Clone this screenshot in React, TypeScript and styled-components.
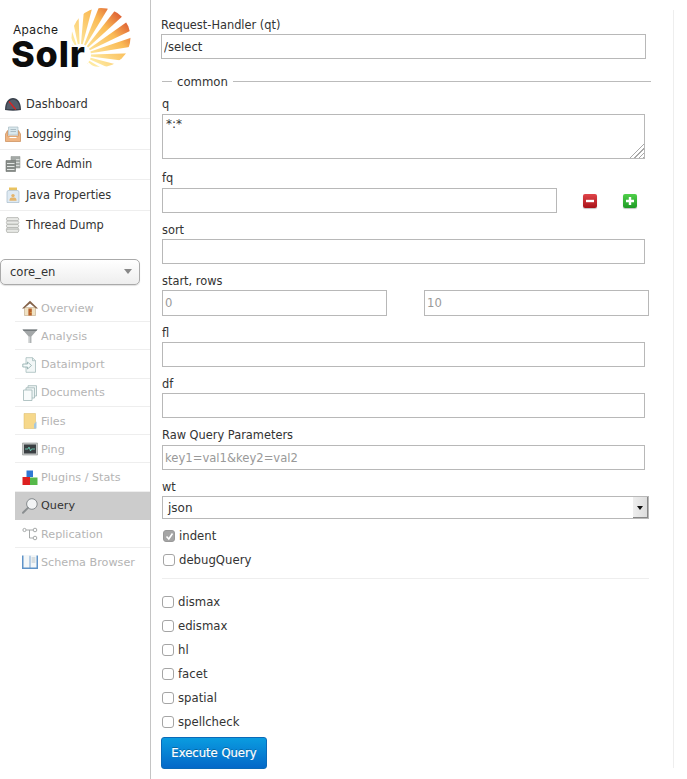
import React from 'react';
import styled, { createGlobalStyle } from 'styled-components';

const GlobalStyle = createGlobalStyle`
  html, body {
    margin: 0;
    padding: 0;
    background: #fff;
    font-family: "DejaVu Sans", "Liberation Sans", sans-serif;
    font-size: 12px;
    color: #333;
  }
  * {
    box-sizing: border-box;
  }
`;

type IconName =
  | 'dashboard'
  | 'logging'
  | 'coreAdmin'
  | 'java'
  | 'thread'
  | 'overview'
  | 'analysis'
  | 'dataimport'
  | 'documents'
  | 'files'
  | 'ping'
  | 'plugins'
  | 'query'
  | 'replication'
  | 'schema';

function NavIcon({ name }: { name: IconName }) {
  return (
    <IconSvg viewBox="0 0 16 16">
      {name === 'dashboard' && (
        <>
          <path d="M0 14 C0 6 3.5 2 8 2 C12.5 2 16 6 16 14 Q8 15.5 0 14 Z" fill="#3a414c" />
          <path d="M1.5 13 C1.5 7 4.5 3.4 8 3.4 C11.5 3.4 14.5 7 14.5 13 Z" fill="#555d6a" />
          <path d="M4 5.5 L10.8 13.5" stroke="#e0201e" strokeWidth="1.2" />
        </>
      )}
      {name === 'logging' && (
        <>
          <path d="M3.5 1 H13 V9 H3.5 Z" fill="#d9e7ec" stroke="#a9bcc4" strokeWidth="0.7" />
          <path d="M5.5 3.5 H11 M5.5 5.5 H11" stroke="#9fb3bb" strokeWidth="0.8" />
          <path d="M0.5 8 L2.5 4.5 V10 H13.5 V4.5 L15.5 8 V15.5 H0.5 Z" fill="#efb582" stroke="#c98a55" strokeWidth="0.7" />
          <path d="M4.5 11.5 H11.5" stroke="#fff" strokeWidth="1.1" />
        </>
      )}
      {name === 'coreAdmin' && (
        <>
          <path d="M6 0.5 H15 V12 H6 Z" fill="#a4a9a6" stroke="#8d928f" strokeWidth="0.5" />
          <path d="M1 4.5 H10.5 V15.5 H1 Z" fill="#868b88" stroke="#6f7471" strokeWidth="0.6" />
          <path d="M2 7.5 H9.5 M2 10.5 H9.5 M2 13.5 H9.5" stroke="#e3e6e4" strokeWidth="1.2" />
          <path d="M11 3.5 H14.5 M11 6.5 H14.5 M11 9.5 H14.5" stroke="#d8dbd9" strokeWidth="1" />
        </>
      )}
      {name === 'java' && (
        <>
          <path d="M4 0.5 H12 V3.4 H4 Z" fill="#eac35f" />
          <path d="M2 5 Q2 3.4 4 3.4 H12 Q14 3.4 14 5 V15.5 H2 Z" fill="#dfeaf3" stroke="#a8bccb" strokeWidth="0.7" />
          <circle cx="8" cy="8.6" r="1.7" fill="#e5b56c" />
          <path d="M4.4 13.8 Q4.6 10.5 6.8 10.5 H9.2 Q11.4 10.5 11.6 13.8 Z" fill="#e5b56c" />
        </>
      )}
      {name === 'thread' && (
        <>
          {[0.6, 4, 7.4, 10.8, 12.2].map((y) => (
            <path key={y} d={`M2 ${y} H13 Q14.8 ${y + 1.5} 13 ${y + 3.2} H2 Q0.7 ${y + 1.5} 2 ${y} Z`} fill="#e8e9e6" stroke="#a9aba6" strokeWidth="0.7" />
          ))}
        </>
      )}
      {name === 'overview' && (
        <>
          <path d="M2.5 7.5 H13.5 V15.5 H2.5 Z" fill="#f0e2c4" stroke="#b49a76" strokeWidth="0.5" />
          <path d="M0 8.5 L8 0.8 L16 8.5 L14 8.5 L8 3.4 L2 8.5 Z" fill="#84634a" />
          <path d="M6.4 8.5 H9.8 V15.5 H6.4 Z" fill="#b7622c" />
          <circle cx="9" cy="12.4" r="0.5" fill="#f4d35a" />
        </>
      )}
      {name === 'analysis' && (
        <>
          <path d="M0.5 1.5 H15.5 L9.4 8.5 V15 H6.6 V8.5 Z" fill="#a4a8a9" />
          <path d="M0.5 1.5 H15.5 L14.4 3 H1.7 Z" fill="#767c7e" />
          <path d="M7.3 8.5 H8.2 V15 H7.3 Z" fill="#dcdfe0" />
        </>
      )}
      {name === 'dataimport' && (
        <>
          <path d="M4 0.7 H10.5 L13.5 3.7 V15.3 H4 Z" fill="#f2f7f7" stroke="#a6bdbd" strokeWidth="0.8" />
          <path d="M10.5 0.7 V3.7 H13.5" fill="none" stroke="#a6bdbd" strokeWidth="0.8" />
          <path d="M0.8 7 H5.5 V5 L9.5 8.5 L5.5 12 V10 H0.8 Z" fill="#f6fbfb" stroke="#8eabab" strokeWidth="0.8" />
        </>
      )}
      {name === 'documents' && (
        <>
          <path d="M6 0.7 H14.5 V11 H6 Z" fill="#eff5f5" stroke="#9fb6b6" strokeWidth="0.8" />
          <path d="M4 2.8 H12.5 V13 H4 Z" fill="#eff5f5" stroke="#9fb6b6" strokeWidth="0.8" />
          <path d="M1.5 5 H10 V15.5 H1.5 Z" fill="#f8fbfb" stroke="#9fb6b6" strokeWidth="0.8" />
        </>
      )}
      {name === 'files' && (
        <>
          <path d="M2 0.5 H13.5 V15.5 H2 Z" fill="#f6d88b" stroke="#d9b866" strokeWidth="0.5" />
          <path d="M12 11 L14.5 8.5 V15.5 H12 Z" fill="#a6c7dd" />
        </>
      )}
      {name === 'ping' && (
        <>
          <path d="M0.5 2 H15.5 V14 H0.5 Z" fill="#c4c6c5" stroke="#8f9291" strokeWidth="0.6" />
          <path d="M2 3.5 H14 V12.5 H2 Z" fill="#3a3f42" />
          <path d="M3 8 H6 L7 6 L8.5 10 L9.5 8 H13" fill="none" stroke="#6fd8bf" strokeWidth="0.8" />
        </>
      )}
      {name === 'plugins' && (
        <>
          <path d="M4.5 0.5 H11 V7 H4.5 Z" fill="#2f78d4" />
          <path d="M0.5 7 H8 V15 H0.5 Z" fill="#dd2020" />
          <path d="M8 7.5 H15.5 V15 H8 Z" fill="#56b94a" />
        </>
      )}
      {name === 'query' && (
        <>
          <circle cx="9.9" cy="6" r="5.3" fill="#f2f4f5" stroke="#7c8184" strokeWidth="0.9" />
          <path d="M5.9 9.9 L1 14.8" stroke="#8a8e90" strokeWidth="2" strokeLinecap="round" />
        </>
      )}
      {name === 'replication' && (
        <g fill="none" stroke="#9c9f9f" strokeWidth="0.9">
          <circle cx="2.5" cy="4" r="1.6" />
          <circle cx="13" cy="4" r="1.8" />
          <circle cx="13" cy="12" r="1.8" />
          <path d="M4.2 4 H11 M7.5 4 V12 H11" />
        </g>
      )}
      {name === 'schema' && (
        <>
          <path d="M0 1.5 H7.5 L8 2.5 L8.5 1.5 H16 V15 H0 Z" fill="#5f93c8" />
          <path d="M1.5 1 H7.6 V13.4 H1.5 Z M8.4 1 H14.5 V13.4 H8.4 Z" fill="#f4f7f8" />
          <path d="M9.6 4 H13.4 M9.6 6 H13.4 M9.6 8 H13.4" stroke="#a5b0b5" strokeWidth="0.7" />
        </>
      )}
    </IconSvg>
  );
}

function SolrLogo() {
  const fx = 80;
  const fy = 55;
  const rays = Array.from({ length: 15 }, (_, i) => {
    const start = -168 + i * 16.6;
    const end = start + 9.5;
    const r = 80;
    const point = (deg: number, len: number) => `${fx + Math.cos((deg * Math.PI) / 180) * len},${fy + Math.sin((deg * Math.PI) / 180) * len}`;
    return `${point(start, 11)} ${point(start, r)} ${point(end, r)} ${point(end, 11)}`;
  });
  return (
    <LogoSvg viewBox="0 0 150 80">
      <defs>
        <linearGradient id="sun" gradientUnits="userSpaceOnUse" x1="84" y1="52" x2="127" y2="11">
          <stop offset="0" stopColor="#fee9a0" />
          <stop offset="0.55" stopColor="#fabb55" />
          <stop offset="1" stopColor="#d33c26" />
        </linearGradient>
        <clipPath id="sunClip">
          <circle cx="101" cy="37.5" r="29.5" />
        </clipPath>
      </defs>
      <g clipPath="url(#sunClip)" fill="url(#sun)">
        {rays.map((points) => (
          <polygon key={points} points={points} />
        ))}
      </g>
      <text x="13" y="34" fontFamily="Inter, sans-serif" fontSize="12" fill="#1a1a1a" letterSpacing="0.3">
        Apache
      </text>
      <text x="11" y="67" fontFamily="Inter, sans-serif" fontSize="36" fontWeight="800" fill="#0c0c0c" letterSpacing="0.8">
        Solr
      </text>
    </LogoSvg>
  );
}

const mainNav: { name: IconName; label: string }[] = [
  { name: 'dashboard', label: 'Dashboard' },
  { name: 'logging', label: 'Logging' },
  { name: 'coreAdmin', label: 'Core Admin' },
  { name: 'java', label: 'Java Properties' },
  { name: 'thread', label: 'Thread Dump' },
];

const coreNav: { name: IconName; label: string }[] = [
  { name: 'overview', label: 'Overview' },
  { name: 'analysis', label: 'Analysis' },
  { name: 'dataimport', label: 'Dataimport' },
  { name: 'documents', label: 'Documents' },
  { name: 'files', label: 'Files' },
  { name: 'ping', label: 'Ping' },
  { name: 'plugins', label: 'Plugins / Stats' },
  { name: 'query', label: 'Query' },
  { name: 'replication', label: 'Replication' },
  { name: 'schema', label: 'Schema Browser' },
];

const options = ['dismax', 'edismax', 'hl', 'facet', 'spatial', 'spellcheck'];

export default function App() {
  return (
    <Page>
      <GlobalStyle />
      <Sidebar>
        <SolrLogo />
        <MainNav>
          {mainNav.map((item, i) => (
            <MainNavItem key={item.name} $last={i === mainNav.length - 1}>
              <NavIcon name={item.name} />
              {item.label}
            </MainNavItem>
          ))}
        </MainNav>
        <CoreSelect>
          core_en
          <Caret />
        </CoreSelect>
        <CoreNav>
          {coreNav.map((item, i) => (
            <CoreNavItem key={item.name} $active={item.name === 'query'} $last={i === coreNav.length - 1}>
              <NavIcon name={item.name} />
              {item.label}
            </CoreNavItem>
          ))}
        </CoreNav>
      </Sidebar>
      <Main>
        <Field $top={6} $shift={-1}>
          <Label>Request-Handler (qt)</Label>
          <Input readOnly value="/select" $width={485} />
        </Field>
        <Legend>
          <span>common</span>
        </Legend>
        <Field $top={7}>
          <Label $high>q</Label>
          <TextArea readOnly value="*:*" />
        </Field>
        <Field $top={11}>
          <Label $high>fq</Label>
          <FqRow>
            <Input readOnly value="" $width={395} />
            <RoundButton $from="#e0454a" $to="#a81218">
              <svg width="8" height="8" viewBox="0 0 8 8">
                <path d="M0 2.8 H8 V5.2 H0 Z" fill="#fff" />
              </svg>
            </RoundButton>
            <RoundButton $from="#4fd04a" $to="#1f9a26">
              <svg width="8" height="8" viewBox="0 0 8 8">
                <path d="M2.8 0 H5.2 V2.8 H8 V5.2 H5.2 V8 H2.8 V5.2 H0 V2.8 H2.8 Z" fill="#fff" />
              </svg>
            </RoundButton>
          </FqRow>
        </Field>
        <Field>
          <Label>sort</Label>
          <Input readOnly value="" />
        </Field>
        <Field>
          <Label>start, rows</Label>
          <PairRow>
            <Input readOnly placeholder="0" $width={225} $height={26} />
            <Input readOnly placeholder="10" $width={225} $height={26} />
          </PairRow>
        </Field>
        <Field>
          <Label>fl</Label>
          <Input readOnly value="" />
        </Field>
        <Field>
          <Label>df</Label>
          <Input readOnly value="" />
        </Field>
        <Field $top={9}>
          <Label $high>Raw Query Parameters</Label>
          <Input readOnly placeholder="key1=val1&key2=val2" />
        </Field>
        <Field>
          <Label>wt</Label>
          <FakeSelect>
            json
            <SelectArrow />
          </FakeSelect>
        </Field>
        <CheckGroup>
          <CheckRow $shift={1}>
            <CheckBox $checked>
              <svg width="9" height="9" viewBox="0 0 9 9">
                <path d="M1.5 4.5 L3.8 7 L7.5 1.5" fill="none" stroke="#fff" strokeWidth="1.6" />
              </svg>
            </CheckBox>
            indent
          </CheckRow>
          <CheckRow $shift={1}>
            <CheckBox />
            debugQuery
          </CheckRow>
        </CheckGroup>
        <Divider />
        <CheckGroup $top={11}>
          {options.map((option) => (
            <CheckRow key={option}>
              <CheckBox />
              {option}
            </CheckRow>
          ))}
        </CheckGroup>
        <ExecuteButton>Execute Query</ExecuteButton>
      </Main>
    </Page>
  );
}

const Page = styled.div`
  display: flex;
  width: 687px;
  height: 779px;
  overflow: hidden;
`;

const IconSvg = styled.svg`
  width: 16px;
  height: 16px;
  flex: none;
`;

const LogoSvg = styled.svg`
  display: block;
  width: 150px;
  height: 80px;
  margin-bottom: 9px;
`;

const Sidebar = styled.aside`
  width: 151px;
  flex: none;
  border-right: 1px solid #c4c4c4;
`;

const MainNav = styled.nav`
  display: flex;
  flex-direction: column;
`;

const MainNavItem = styled.div<{ $last?: boolean }>`
  display: flex;
  align-items: center;
  gap: 5px;
  height: 30.4px;
  padding-left: 5px;
  font-size: 11.4px;
  color: #333;
  border-bottom: 1px solid ${(props) => (props.$last ? 'transparent' : '#eee')};
`;

const CoreSelect = styled.div`
  display: flex;
  align-items: center;
  justify-content: space-between;
  width: 140px;
  height: 26px;
  margin-top: 18px;
  padding: 0 7px 0 9px;
  border: 1px solid #aaa;
  border-radius: 5px;
  background: linear-gradient(#fff, #eee);
  box-shadow: 0 1px 1px rgba(0, 0, 0, 0.12);
  font-size: 11.6px;
  color: #333;
`;

const Caret = styled.span`
  width: 0;
  height: 0;
  border-left: 4px solid transparent;
  border-right: 4px solid transparent;
  border-top: 5px solid #888;
`;

const CoreNav = styled.nav`
  display: flex;
  flex-direction: column;
  margin: 9px 0 0 15px;
`;

const CoreNavItem = styled.div<{ $active?: boolean; $last?: boolean }>`
  display: flex;
  align-items: center;
  gap: 3px;
  height: 28.25px;
  padding: 1px 0 0 7px;
  font-size: 11.2px;
  color: ${(props) => (props.$active ? '#333' : '#b4b4b4')};
  background: ${(props) => (props.$active ? '#ccc' : 'transparent')};
  border-bottom: 1px solid ${(props) => (props.$last || props.$active ? 'transparent' : '#eee')};
`;

const Main = styled.main`
  width: 523px;
  height: 758px;
  margin-top: 10px;
  padding-left: 11px;
  border-right: 1px solid #eee;
`;

const Field = styled.div<{ $top?: number; $shift?: number }>`
  margin-top: ${(props) => props.$top ?? 8}px;
  margin-left: ${(props) => props.$shift ?? 0}px;
`;

const Label = styled.label<{ $high?: boolean }>`
  display: block;
  height: 16px;
  margin-bottom: 2px;
  line-height: ${(props) => (props.$high ? 16 : 18)}px;
  font-size: 11.4px;
  color: #333;
`;

const Input = styled.input<{ $width?: number; $height?: number }>`
  display: block;
  width: ${(props) => props.$width ?? 483}px;
  height: ${(props) => props.$height ?? 25}px;
  padding: 0 2px;
  border: 1px solid #b8b8b8;
  outline: none;
  font-family: inherit;
  font-size: 11.6px;
  color: #333;
  &::placeholder {
    color: #999;
    opacity: 1;
  }
`;

const TextArea = styled.textarea`
  display: block;
  width: 483px;
  height: 45px;
  padding: 2px 3px;
  border: 1px solid #b8b8b8;
  outline: none;
  font-family: inherit;
  font-size: 12px;
  color: #333;
  &::-webkit-resizer {
    background: linear-gradient(135deg, #fff 50%, transparent 50%), repeating-linear-gradient(135deg, #fff 0 2px, #a8a8a8 2px 3px);
  }
`;

const Legend = styled.div`
  display: flex;
  align-items: center;
  gap: 5px;
  width: 489px;
  height: 16px;
  margin-top: 14px;
  font-size: 11.7px;
  color: #333;
  &::before {
    content: '';
    width: 10px;
    height: 1px;
    background: #bbb;
  }
  &::after {
    content: '';
    flex: 1;
    height: 1px;
    background: #bbb;
  }
  span {
    padding-top: 2px;
  }
`;

const FqRow = styled.div`
  display: flex;
  align-items: center;
`;

const RoundButton = styled.span<{ $from: string; $to: string }>`
  display: flex;
  align-items: center;
  justify-content: center;
  width: 14px;
  height: 14px;
  margin-left: 26px;
  border-radius: 2px;
  background: linear-gradient(${(props) => props.$from}, ${(props) => props.$to});
  box-shadow: 0 1px 1px rgba(0, 0, 0, 0.25);
`;

const PairRow = styled.div`
  display: flex;
  gap: 37px;
`;

const FakeSelect = styled.div`
  display: flex;
  align-items: center;
  justify-content: space-between;
  width: 487px;
  height: 23px;
  padding-left: 5px;
  border: 1px solid #b8b8b8;
  font-size: 12px;
  color: #333;
`;

const SelectArrow = styled.span`
  position: relative;
  width: 15px;
  height: 21px;
  background: linear-gradient(to right, #eee, #ddd);
  border-right: 1px solid #888;
  border-bottom: 1px solid #888;
  &::after {
    content: '';
    position: absolute;
    top: 9px;
    left: 4px;
    border-left: 3px solid transparent;
    border-right: 3px solid transparent;
    border-top: 4px solid #111;
  }
`;

const CheckGroup = styled.div<{ $top?: number }>`
  display: flex;
  flex-direction: column;
  margin-top: ${(props) => props.$top ?? 5}px;
`;

const CheckRow = styled.label<{ $shift?: number }>`
  display: flex;
  align-items: center;
  gap: 4px;
  height: 24px;
  padding-left: ${(props) => props.$shift ?? 0}px;
  font-size: 11.7px;
  color: #333;
`;

const CheckBox = styled.span<{ $checked?: boolean }>`
  display: flex;
  align-items: center;
  justify-content: center;
  width: 12px;
  height: 12px;
  border: 1px solid ${(props) => (props.$checked ? '#999' : '#a5a5a5')};
  border-radius: 3px;
  background: ${(props) => (props.$checked ? '#a5a5a5' : '#fff')};
`;

const Divider = styled.hr`
  width: 487px;
  height: 1px;
  margin: 6px 0 0;
  border: 0;
  background: #eee;
`;

const ExecuteButton = styled.button`
  display: block;
  width: 106px;
  height: 32px;
  margin: 3px 0 0 -1px;
  padding: 0;
  border: 1px solid #0a6ab8;
  border-radius: 3px;
  background: linear-gradient(#0a9ce0, #0468c8);
  font-family: inherit;
  font-size: 11.6px;
  font-weight: 400;
  color: #fff;
  -webkit-text-stroke: 0.2px #fff;
  text-shadow: 0 -1px 0 rgba(0, 0, 0, 0.25);
`;
